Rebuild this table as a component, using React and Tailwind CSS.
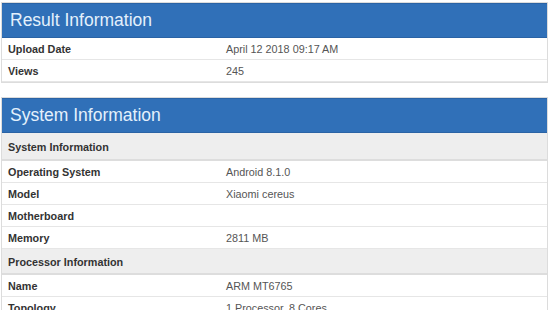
const panels = [
  {
    title: "Result Information",
    rows: [
      { label: "Upload Date", value: "April 12 2018 09:17 AM" },
      { label: "Views", value: "245" },
    ],
  },
  {
    title: "System Information",
    rows: [
      { section: "System Information" },
      { label: "Operating System", value: "Android 8.1.0" },
      { label: "Model", value: "Xiaomi cereus" },
      { label: "Motherboard", value: "" },
      { label: "Memory", value: "2811 MB" },
      { section: "Processor Information" },
      { label: "Name", value: "ARM MT6765" },
      { label: "Topology", value: "1 Processor, 8 Cores" },
    ],
  },
]

function Panel({ title, rows }) {
  return (
    <div className="w-[547px] ml-[1px] border border-[#dcdcdc] bg-white">
      <div className="h-[35px] bg-[#3070b8] border-y border-[#2a63a5] flex items-center pl-[8px] text-[17.5px] text-[#e4f0fc]">
        {title}
      </div>
      {rows.map((r, i) =>
        r.section ? (
          <div
            key={i}
            className={`${i === 0 ? "h-[28px]" : "h-[26px]"} bg-[#eeeeee] border-b-2 border-[#dddddd] flex items-center pt-[2px] pl-[6px] text-[10.8px] font-bold text-[#333]`}
          >
            {r.section}
          </div>
        ) : (
          <div
            key={i}
            className="h-[22px] border-b border-[#e6e6e6] flex items-center pt-[2px] text-[10.8px] text-[#333]"
          >
            <div className="w-[224px] pl-[6px] font-bold">{r.label}</div>
            <div className="text-[#555]">{r.value}</div>
          </div>
        )
      )}
    </div>
  )
}

export default function App() {
  return (
    <div className="w-[550px] h-[310px] overflow-hidden bg-white pt-[2px] font-['Liberation_Sans',Arial,sans-serif] flex flex-col gap-[14px]">
      {panels.map((p) => (
        <Panel key={p.title} {...p} />
      ))}
    </div>
  )
}
